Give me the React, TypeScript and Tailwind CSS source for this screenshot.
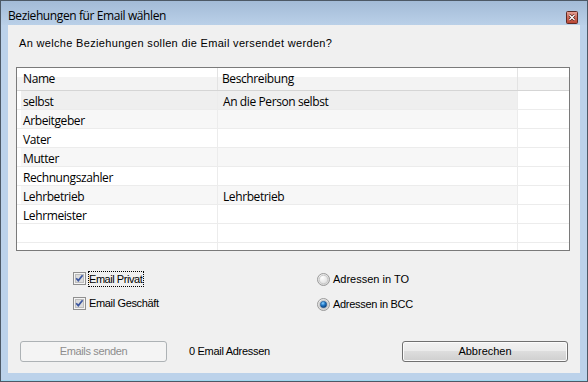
import React from 'react';

const rows = [
  { name: 'selbst', desc: 'An die Person selbst' },
  { name: 'Arbeitgeber', desc: '' },
  { name: 'Vater', desc: '' },
  { name: 'Mutter', desc: '' },
  { name: 'Rechnungszahler', desc: '' },
  { name: 'Lehrbetrieb', desc: 'Lehrbetrieb' },
  { name: 'Lehrmeister', desc: '' },
  { name: '', desc: '' },
  { name: '', desc: '' },
];

function rowBg(i: number, name: string) {
  if (i === 0) return 'bg-[#efefef]';
  if (name && i % 2 === 1) return 'bg-[#f7f7f7]';
  return 'bg-white';
}

function CheckBox() {
  return (
    <svg width="13" height="13" viewBox="0 0 13 13" className="shrink-0">
      <rect x="0.5" y="0.5" width="12" height="12" fill="#f4f4f4" stroke="#8f8f8f" />
      <rect x="2" y="2" width="9" height="9" fill="#dcdcdc" />
      <rect x="2.5" y="2.5" width="8" height="8" fill="none" stroke="#bdbdbd" />
      <path d="M3.2 6.2 L5.3 8.6 L9.6 3.3" fill="none" stroke="#3b56a0" strokeWidth="1.7" />
    </svg>
  );
}

function Radio({ checked }: { checked?: boolean }) {
  return (
    <svg width="13" height="13" viewBox="0 0 13 13" className="shrink-0">
      <defs>
        <radialGradient id="rg" cx="0.4" cy="0.35" r="0.7">
          <stop offset="0" stopColor="#ffffff" />
          <stop offset="1" stopColor="#d4d4d4" />
        </radialGradient>
        <radialGradient id="dot" cx="0.4" cy="0.3" r="0.7">
          <stop offset="0" stopColor="#8fd3ff" />
          <stop offset="0.5" stopColor="#1f78c8" />
          <stop offset="1" stopColor="#0c3e78" />
        </radialGradient>
      </defs>
      <circle cx="6.5" cy="6.5" r="6" fill="url(#rg)" stroke="#9a9a9a" />
      <circle cx="6.5" cy="6.5" r="4.3" fill="none" stroke="#c8c8c8" />
      {checked && <circle cx="6.5" cy="6.5" r="3.2" fill="url(#dot)" stroke="#1d4f86" strokeWidth="0.6" />}
    </svg>
  );
}

export default function App() {
  return (
    <div className="w-[588px] h-[382px] border border-[#4d5966] bg-[#bcd2ea] flex flex-col font-['Liberation_Sans',sans-serif] text-black">
      {/* title bar */}
      <div className="h-[24px] shrink-0 flex justify-between pl-[7px] pr-[9px] bg-[linear-gradient(to_bottom,#a3bbd7,#bad0e8)]">
        <div className="font-['Open_Sans',sans-serif] text-[12px] tracking-[-0.4px] leading-[16px] pt-[7px]">Beziehungen für Email wählen</div>
        <div className="mt-[10px] w-[12px] h-[13px]">
          <svg width="12" height="13" viewBox="0 0 12 13">
            <defs>
              <linearGradient id="cl" x1="0" y1="0" x2="0" y2="1">
                <stop offset="0" stopColor="#e6a397" />
                <stop offset="0.5" stopColor="#cf6a5a" />
                <stop offset="1" stopColor="#b8432f" />
              </linearGradient>
            </defs>
            <rect x="0.5" y="0.5" width="11" height="12" rx="1" fill="url(#cl)" stroke="#5e2a24" />
            <path d="M3.5 4 L8.5 9 M8.5 4 L3.5 9" stroke="#4a1a14" strokeWidth="2.6" />
            <path d="M3.5 4 L8.5 9 M8.5 4 L3.5 9" stroke="#ffffff" strokeWidth="1.4" />
          </svg>
        </div>
      </div>

      {/* client frame */}
      <div className="flex-1 px-[7px] pb-[7px] border-b border-[#9fd7ee]">
        <div className="w-[572px] h-[348px] bg-[#f0f0f0] flex flex-col">
          <div className="mt-[12px] ml-[11px] text-[11px] tracking-[0.33px] leading-[13px]">An welche Beziehungen sollen die Email versendet werden?</div>

          {/* list view */}
          <div className="mt-[17px] ml-[8px] w-[554px] h-[184px] border border-[#7a7a7a] bg-white overflow-hidden font-['Open_Sans',sans-serif] text-[12px] tracking-[-0.4px]">
            <div className="h-[23px] flex border-b border-[#d5d5d5] bg-[linear-gradient(to_bottom,#ffffff_0,#ffffff_40%,#f3f3f3_40%,#f3f3f3_100%)] leading-[22px]">
              <div className="w-[201px] pl-[6px] border-r border-[#e3e3e3]">Name</div>
              <div className="w-[300px] pl-[4px] border-r border-[#e3e3e3]">Beschreibung</div>
              <div className="flex-1" />
            </div>
            {rows.map((r, i) => (
              <div key={i} className="h-[19px] flex border-b border-[#ececec] leading-[18px]">
                <div className="w-[4px]" />
                <div className={`w-[197px] pl-[2px] pt-[2px] border-r border-[#ececec] ${rowBg(i, r.name)}`}>{r.name}</div>
                <div className={`w-[300px] pl-[5px] pt-[2px] border-r border-[#ececec] ${rowBg(i, r.name)}`}>{r.desc}</div>
                <div className="flex-1" />
              </div>
            ))}
          </div>

          {/* options */}
          <div className="mt-[19px] flex text-[11px] leading-[13px]">
            <div className="ml-[65px] w-[244px] flex flex-col gap-[8px]">
              <div className="h-[17px] flex items-center gap-[2px]">
                <CheckBox />
                <span className="border border-dotted border-black pr-[1px] leading-[14px] tracking-[-0.45px]">Email Privat</span>
              </div>
              <div className="h-[17px] flex items-center gap-[3px]">
                <CheckBox />
                <span className="tracking-[-0.35px]">Email Geschäft</span>
              </div>
            </div>
            <div className="flex flex-col gap-[8px]">
              <div className="h-[17px] flex items-center gap-[3px] pt-[2px]">
                <Radio />
                <span>Adressen in TO</span>
              </div>
              <div className="h-[17px] flex items-center gap-[3px] pt-[2px]">
                <Radio checked />
                <span className="tracking-[-0.3px]">Adressen in BCC</span>
              </div>
            </div>
          </div>

          {/* buttons */}
          <div className="mt-[29px] flex items-center text-[11px]">
            <div className="ml-[12px] w-[147px] h-[21px] rounded-[3px] border border-[#adb2b5] bg-[#f4f4f4] flex items-center justify-center text-[#8d8d8d] tracking-[-0.35px]">Emails senden</div>
            <div className="ml-[22px] tracking-[-0.3px]">0 Email Adressen</div>
            <div className="ml-auto mr-[12px] w-[166px] h-[21px] rounded-[3px] border border-[#707070] bg-[linear-gradient(to_bottom,#f2f2f2_0,#ebebeb_45%,#dddddd_50%,#cfcfcf_100%)] shadow-[inset_0_0_0_1px_#fbfbfb] flex items-center justify-center">Abbrechen</div>
          </div>
        </div>
      </div>
    </div>
  );
}
